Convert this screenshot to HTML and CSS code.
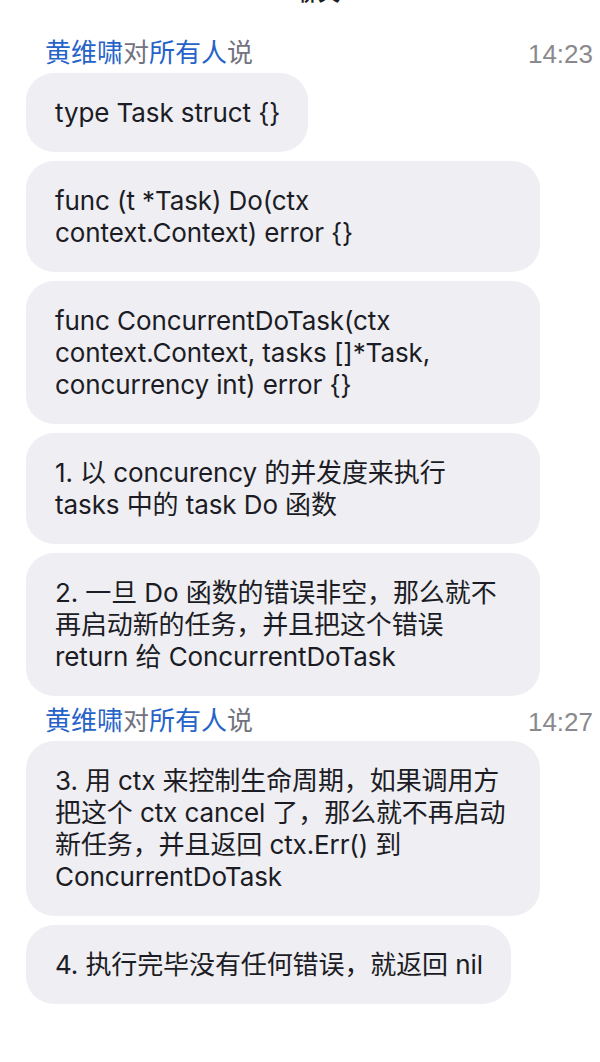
FILE: index.html
```html
<!DOCTYPE html>
<html lang="zh">
<head>
<meta charset="utf-8">
<link rel="stylesheet" href="styles.css">
</head>
<body>
<div class="title"><span class="title-text">聊天</span></div>
<div class="chat">
  <div class="group">
    <div class="meta">
      <div class="who"><span class="name">黄维啸</span>对<span class="name">所有人</span>说</div>
      <div class="time">14:23</div>
    </div>
    <div class="bubbles">
      <div class="bubble">type Task struct {}</div>
      <div class="bubble multi">func (t *Task) Do(ctx<br>context.Context) error {}</div>
      <div class="bubble multi">func ConcurrentDoTask(ctx<br>context.Context, tasks []*Task,<br>concurrency int) error {}</div>
      <div class="bubble multi">1. 以 concurency 的并发度来执行<br>tasks 中的 task Do 函数</div>
      <div class="bubble multi">2. 一旦 Do 函数的错误非空，那么就不<br>再启动新的任务，并且把这个错误<br>return 给 ConcurrentDoTask</div>
    </div>
  </div>
  <div class="group">
    <div class="meta">
      <div class="who"><span class="name">黄维啸</span>对<span class="name">所有人</span>说</div>
      <div class="time">14:27</div>
    </div>
    <div class="bubbles">
      <div class="bubble multi">3. 用 ctx 来控制生命周期，如果调用方<br>把这个 ctx cancel 了，那么就不再启动<br>新任务，并且返回 ctx.Err() 到<br>ConcurrentDoTask</div>
      <div class="bubble">4. 执行完毕没有任何错误，就返回 nil</div>
    </div>
  </div>
</div>
</body>
</html>
```
FILE: styles.css
```css
html, body {
  margin: 0;
  padding: 0;
  background: #ffffff;
}
body {
  width: 600px;
  height: 1062px;
  overflow: hidden;
  font-family: Inter, "Noto Sans CJK SC", sans-serif;
  -webkit-font-smoothing: antialiased;
}
.title {
  height: 4px;
  overflow: hidden;
  display: flex;
  justify-content: center;
}
.title-text {
  display: block;
  font-size: 22px;
  line-height: 22px;
  margin-top: -19px;
  font-weight: 600;
  color: #1c1c24;
  padding-left: 36px;
}
.chat {
  padding: 29px 7px 0 26px;
  display: flex;
  flex-direction: column;
  gap: 5px;
}
.meta {
  display: flex;
  justify-content: space-between;
  align-items: flex-start;
  padding-left: 19px;
  margin-bottom: 3px;
}
.who {
  font-size: 26px;
  line-height: 32px;
  padding-top: 4px;
  color: #737380;
}
.name {
  color: #2563c9;
}
.time {
  font-family: "Liberation Sans", Arial, sans-serif;
  font-size: 26px;
  line-height: 32px;
  color: #8a8a8e;
  padding-top: 5px;
}
.bubbles {
  display: flex;
  flex-direction: column;
  align-items: flex-start;
  gap: 9px;
}
.bubble {
  background: #eeeef3;
  color: #1c1c24;
  font-size: 26px;
  line-height: 32px;
  letter-spacing: -0.1px;
  padding: 23.5px 28px 23.5px 29px;
  border-radius: 28px;
  box-sizing: border-box;
  white-space: nowrap;
}
.bubble.multi {
  width: 514px;
}
```
